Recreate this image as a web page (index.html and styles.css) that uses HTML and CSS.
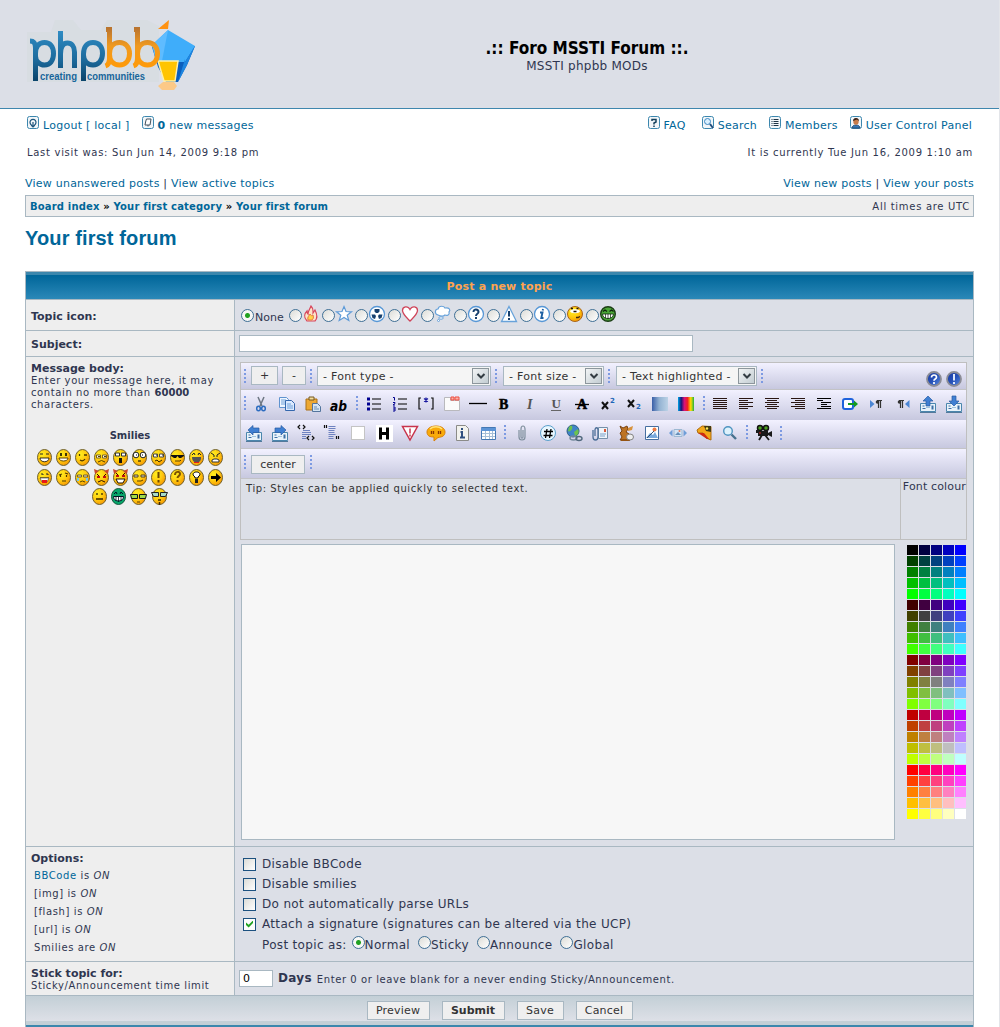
FILE: index.html
```html
<!DOCTYPE html>
<html lang="en">
<head>
<meta charset="utf-8">
<title>Foro MSSTI Forum - Post a new topic</title>
<link rel="stylesheet" href="styles.css">
</head>
<body>
<svg class="defs" aria-hidden="true">
  <defs>
    <linearGradient id="g-blue" gradientUnits="userSpaceOnUse" x1="0" y1="10" x2="0" y2="60"><stop offset="0" stop-color="#2f8cc4"/><stop offset=".6" stop-color="#1c6a9c"/><stop offset="1" stop-color="#0b456c"/></linearGradient>
    <linearGradient id="g-orange" gradientUnits="userSpaceOnUse" x1="0" y1="8" x2="0" y2="48"><stop offset="0" stop-color="#b9742f"/><stop offset=".45" stop-color="#f09a20"/><stop offset="1" stop-color="#ff9a08"/></linearGradient>
    <radialGradient id="g-face" cx=".35" cy=".3" r=".8"><stop offset="0" stop-color="#ffee20"/><stop offset=".5" stop-color="#ffcb10"/><stop offset="1" stop-color="#f59000"/></radialGradient>
    <linearGradient id="g-steel"><stop offset="0" stop-color="#3a5fa8"/><stop offset=".45" stop-color="#93b2d2"/><stop offset="1" stop-color="#bcd2e6"/></linearGradient>
    <linearGradient id="g-rain"><stop offset="0" stop-color="#00a8e8"/><stop offset=".2" stop-color="#15157a"/><stop offset=".4" stop-color="#d8127a"/><stop offset=".6" stop-color="#f02020"/><stop offset=".8" stop-color="#ffe000"/><stop offset="1" stop-color="#20b040"/></linearGradient>
    <linearGradient id="g-help" x1="0" y1="0" x2="1" y2="1"><stop offset="0" stop-color="#1c3aa0"/><stop offset=".5" stop-color="#2450b8"/><stop offset="1" stop-color="#5f8fe0"/></linearGradient>
    <g id="face"><ellipse cx="7.5" cy="8.5" rx="7" ry="8" fill="url(#g-face)" stroke="#6d6030"/></g>
    <g id="frame"><rect x=".5" y=".5" width="11" height="12" rx="2" fill="#f2f6f9" stroke="#3c87ae"/></g>
    <g id="tray"><path d="M2.500 9.500h15v8h-15z" fill="#e9f3fa" stroke="#4b86ad"/><path d="M4.500 11.500h2v1h-2zM4.500 14h3v1h-3zM13.500 11.500h2v4h-2z" fill="#3b6ea5"/><path d="M8 13.500h4" stroke="#9fc3de"/><path d="M2 18.500h16" stroke="#53799b"/></g>
  </defs>
</svg>

<div class="page">
<header class="banner">
  <svg class="logo" viewBox="0 0 180 80" role="img" aria-label="phpBB creating communities">
    <path d="M0 12h24l4-12h18l8 10h20l6-10h40l12 6v56H0z" fill="#d3d9dd" opacity=".4"/>
    <path d="M125 27l6 20 8 15h12l9-17 8-19z" fill="#0b5fbe"/>
    <path d="M125 25l16-15 27 16-10 16h-27z" fill="#3fadfa"/>
    <path d="M141 10l-6 31h-6l-4-16z" fill="#5fbcff"/>
    <path d="M168 26l-10 16v-3l-7 23 9-17z" fill="#1e86e0"/>
    <path d="M131 41h20l-3 20h-11z" fill="#ffc400" stroke="#fff0a8" stroke-width="1.500"/>
    <path d="M131 9l11-9-1 9z" fill="#ff9212"/>
    <path d="M136 62h11l3 4-3 4h-12l-4-4z" fill="#ffc77c" opacity=".9"/>
    <g fill="none" stroke-width="5">
      <path d="M3 21c4 0 5.500 2 5.500 7v33M8.500 33.500c0-7 3.500-11 9-11s9 4 9 11-3.500 11.500-9 11.500c-5 0-9-4-9-9" stroke="url(#g-blue)"/>
      <path d="M33.500 11v37M33.500 34c0-8 3-11 7-11s7 3 7 9v16" stroke="url(#g-blue)"/>
      <path d="M56.500 61V34M56.500 34c0-7 3.500-11.500 9.500-11.500s9.500 4 9.500 11-4 11.500-9.500 11.500-9.500-4-9.500-10" stroke="url(#g-blue)"/>
      <path d="M79 9.500h3.500V38c0 5-1 7-4 8M82.500 34c0-8 4.500-11.500 10-11.500s10 4 10 11-4 11.500-10 11.500-10-4-10-11" stroke="url(#g-orange)"/>
      <path d="M107 9.500h3.500V38c0 5-1 7-4 8M110.500 34c0-8 4.500-11.500 10-11.500s10 4 10 11-4 11.500-10 11.500-10-4-10-11" stroke="url(#g-orange)"/>
    </g>
    <text x="13" y="60" class="logo-tag" textLength="37" lengthAdjust="spacingAndGlyphs">creating</text>
    <text x="60" y="60" class="logo-tag" textLength="58" lengthAdjust="spacingAndGlyphs">communities</text>
  </svg>
  <div class="site">
    <h1>.:: Foro MSSTI Forum ::.</h1>
    <p>MSSTI phpbb MODs</p>
  </div>
</header>

<nav class="menubar">
  <div class="menu">
    <a class="mi"><svg width="12" height="13"><use href="#frame"/><path d="M4.500 9a3 3 0 1 1 3 0M6 6v5M4 9l2 2 2-2" fill="none" stroke="#1d557c" stroke-width="1.200"/></svg><span>Logout [ local ]</span></a>
    <a class="mi"><svg width="12" height="13"><use href="#frame"/><path d="M4.500 3h4.500l-1 6H3l.8-4zM6 9v1.500" fill="#fff" stroke="#44525e"/></svg><span><b>0</b> new messages</span></a>
  </div>
  <div class="menu menu-right">
    <a class="mi"><svg width="12" height="13"><use href="#frame"/><path d="M4 5V3.500h4V6L6 7v1.500M6 9.500V11" fill="none" stroke="#14405c" stroke-width="1.500"/></svg><span>FAQ</span></a>
    <a class="mi"><svg width="12" height="13"><use href="#frame"/><circle cx="5.500" cy="5.500" r="3" fill="#d9f0ff" stroke="#3b86c0"/><path d="M8 8l3 4" stroke="#234f7e" stroke-width="2"/></svg><span>Search</span></a>
    <a class="mi"><svg width="12" height="13"><use href="#frame"/><path d="M2.500 3.500h1M2.500 5.500h1M2.500 7.500h1M2.500 9.500h1M4.500 3.500h5M4.500 5.500h5M4.500 7.500h5M4.500 9.500h5" stroke="#1d3344"/></svg><span>Members</span></a>
    <a class="mi"><svg width="12" height="13"><use href="#frame"/><path d="M2 12c0-4 8-4 8 0z" fill="#3678b8" stroke="#244c76"/><ellipse cx="6" cy="5.500" rx="2.700" ry="3.300" fill="#c77b4a"/><path d="M3 5c0-4 6-4 6 0l-2-1.500z" fill="#382018"/></svg><span>User Control Panel</span></a>
  </div>
</nav>
<div class="times"><span>Last visit was: Sun Jun 14, 2009 9:18 pm</span><span class="now">It is currently Tue Jun 16, 2009 1:10 am</span></div>

<div class="searches"><span><a>View unanswered posts</a> | <a>View active topics</a></span><span><a>View new posts</a> | <a>View your posts</a></span></div>
<div class="crumbs"><span class="path"><a>Board index</a> » <a>Your first category</a> » <a>Your first forum</a></span><span class="utc">All times are UTC</span></div>
<h2>Your first forum</h2>

<form class="post">
  <div class="caption">Post a new topic</div>

  <div class="row row-icon">
    <div class="label mid"><b>Topic icon:</b></div>
    <div class="field icons">
      <label class="none"><input type="radio" name="icon" checked><span>None</span></label>
      <label><input type="radio" name="icon"><svg width="18" height="18"><path d="M5 16C1 12 3 8 5 6c0 2 1 3 1 3 0-3 2-5 3-8 3 3 2 5 2 7l2-3c2 4 3 8 0 11z" fill="#fbe3c8" stroke="#d8455c" stroke-width="1.200"/><path d="M6 15c-1-3 1-4 2-6 1 2 2 2 3 1 1 3 0 4-1 5z" fill="#ffd34a" stroke="#e87840"/></svg></label>
      <label><input type="radio" name="icon"><svg width="18" height="18"><path d="M9 1.500l2 5 5.500.3-4.300 3.400 1.600 5.300L9 12.500l-4.800 3 1.600-5.300L1.500 6.800 7 6.500z" fill="#fff" stroke="#5e9bd8" stroke-width="1.200"/></svg></label>
      <label><input type="radio" name="icon"><svg width="18" height="18"><circle cx="9" cy="9" r="7.500" fill="#fff" stroke="#5797d6" stroke-width="1.300"/><path d="M6.500 4h5v2.500L10 8H8L6.500 6.500zM3.500 9.500H7L8 11l-1 3-2.500-1zM14.500 9.500H11L10 11l1 3 2.500-1z" fill="#17406e"/></svg></label>
      <label><input type="radio" name="icon"><svg width="18" height="18"><path d="M9 16C5 12 1.500 9 1.500 5.500 1.500 1 7 .5 9 4.500 11 .5 16.500 1 16.500 5.500 16.500 9 13 12 9 16z" fill="#fff" stroke="#cf4459" stroke-width="1.300"/></svg></label>
      <label><input type="radio" name="icon"><svg width="18" height="18"><path d="M4 10C0 9 1 4 4 4c1-4 6-3 7-1 4-1 6 2 4 4 1 3-2 4-4 3-2 2-5 1-7 0z" fill="#fff" stroke="#68a2da" stroke-width="1.200"/><ellipse cx="7" cy="13" rx="2.300" ry="1.200" fill="#fff" stroke="#68a2da"/><circle cx="4.500" cy="15.500" r="1" fill="#fff" stroke="#68a2da"/></svg></label>
      <label><input type="radio" name="icon"><svg width="18" height="18"><circle cx="9" cy="9" r="7.500" fill="#fff" stroke="#5797d6" stroke-width="1.300"/><path d="M6.500 7c0-3.500 5-3 5 0 0 2-2.500 1.500-2.500 4M9 12v2" fill="none" stroke="#17406e" stroke-width="2"/></svg></label>
      <label><input type="radio" name="icon"><svg width="18" height="18"><path d="M9 1.500l7.500 15h-15z" fill="#fff" stroke="#68a2da" stroke-width="1.300"/><path d="M9 6v5.500M9 13v2" stroke="#17406e" stroke-width="2"/></svg></label>
      <label><input type="radio" name="icon"><svg width="18" height="18"><circle cx="9" cy="9" r="7.500" fill="#fff" stroke="#5797d6" stroke-width="1.300"/><path d="M7 7.500h2.500L8.300 13H10.500M10 4l-.3 1.500" fill="none" stroke="#1c5fa2" stroke-width="1.900"/></svg></label>
      <label><input type="radio" name="icon"><svg width="18" height="18"><circle cx="9" cy="9" r="7.500" fill="url(#g-face)" stroke="#a8641c"/><path d="M4 6c1-2.500 9-2.500 10 0 0 3-10 3-10 0z" fill="#fff"/><path d="M5 3.500h2M10.500 3.500h2M7.500 6.500h3" stroke="#201408" stroke-width="1.400"/><path d="M10 12.500h2l2-1" fill="none" stroke="#402810" stroke-width="1.300"/></svg></label>
      <label><input type="radio" name="icon"><svg width="18" height="18"><circle cx="9" cy="9" r="7.300" fill="#4aa636" stroke="#1c3e16" stroke-width="1.400"/><path d="M4 6.500l2-1.500 2 1.500M10.500 6.500l2-1.500 2 1.500" fill="none" stroke="#0c220a" stroke-width="1.200"/><path d="M3.500 9h11c0 6-11 6-11 0z" fill="#fff" stroke="#0c220a" stroke-width=".8"/><path d="M6.500 9v4M9 9v5M11.500 9v4" stroke="#0c220a" stroke-width=".7"/></svg></label>
    </div>
  </div>

  <div class="row row-subject">
    <div class="label mid"><b>Subject:</b></div>
    <div class="field"><input class="subject" type="text"></div>
  </div>

  <div class="row row-body">
    <div class="label">
      <b>Message body:</b>
      <p class="small">Enter your message here, it may<br>contain no more than <b>60000</b><br>characters.</p>
      <div class="smilies-title">Smilies</div>
      <div class="smilies">
        <div>
          <svg><use href="#face"/><path d="M3 5h3M9 5h3" stroke="#222"/><path d="M3 9h9c0 5-9 5-9 0z" fill="#fff" stroke="#000" stroke-width=".8"/></svg>
          <svg><use href="#face"/><path d="M5 4v3M10 4v3" stroke="#000" stroke-width="1.500"/><path d="M3 9h9c0 4-9 4-9 0z" fill="#fff" stroke="#5d4300"/></svg>
          <svg><use href="#face"/><path d="M4.500 5v2M9 6h3M5 11q3 2 5-1" fill="none" stroke="#4c3600" stroke-width="1.300"/></svg>
          <svg><use href="#face"/><path d="M2.500 6h4v3h-4zM8.500 6h4v3h-4z" fill="#ffe" stroke="#776124"/><path d="M4 7.500h2M10 7.500h2M4 13q3.500-3 7 0" fill="none" stroke="#5a4200"/></svg>
          <svg><use href="#face"/><path d="M2.500 4h4v3h-4zM8.500 4h4v3h-4z" fill="#fff" stroke="#333"/><path d="M6 9h3v5H6z" fill="#111"/></svg>
          <svg><use href="#face"/><circle cx="4" cy="6" r="2.800" fill="#fff" stroke="#222"/><circle cx="11" cy="6" r="2.800" fill="#fff" stroke="#222"/><path d="M4 6h1M10 6h1M6 12h3" stroke="#000"/></svg>
          <svg><use href="#face"/><path d="M2.500 5h4v3h-4zM8.500 5h4v3h-4z" fill="#fff" stroke="#444"/><path d="M5 6h1M11 6h1M4 12l2-1 2 2 3-2" fill="none" stroke="#3c2900"/></svg>
          <svg><use href="#face"/><path d="M1 6h13v1l-3 2H9L7.500 7 6 9H4L1 7z" fill="#111"/><path d="M5 12h5l1-1" fill="none" stroke="#5b3e00"/></svg>
          <svg><use href="#face"/><path d="M3 6l2-2 1 2M9 6l1-2 2 2" fill="none" stroke="#222"/><path d="M3 8h9c1 7-9 8-9 0z" fill="#555"/><path d="M5 13h5v1H5z" fill="#e02020"/></svg>
          <svg><use href="#face"/><path d="M3 4l3 2v2M12 4L9 6v2" fill="none" stroke="#222"/><path d="M4 13v-2l2-1h3l2 1v2z" fill="#fff" stroke="#333"/></svg>
        </div>
        <div>
          <svg><use href="#face"/><path d="M4 5h2v1M9 5h2v1M3 9h9" fill="none" stroke="#222"/><path d="M3 9h9l-2 4H5z" fill="#fff" stroke="#333" stroke-width=".6"/><path d="M5 11h5v3H5z" fill="#e81818"/></svg>
          <svg><use href="#face"/><path d="M3 6l3-1M9 4l3 1M4.500 6v2M10.500 6v2M6 12h4" fill="none" stroke="#513700" stroke-width="1.200"/></svg>
          <svg><use href="#face"/><path d="M2.500 6h4v2h-4zM8.500 6h4v2h-4z" fill="#ddd" stroke="#776124"/><path d="M3 9v3M12 9v3" stroke="#74c7ee" stroke-width="2"/><path d="M5 13q2-2 5 0" fill="none" stroke="#5a4200"/></svg>
          <svg><use href="#face"/><path d="M0 0l5 2-4 3zM15 0l-5 2 4 3z" fill="#c84a2c"/><path d="M3 5l3 3M12 5L9 8" stroke="#300"/><path d="M3 7h3v2H3zM9 7h3v2H9z" fill="#c01010"/><path d="M4 13q3.500-3 7 0" fill="none" stroke="#301000"/></svg>
          <svg><use href="#face"/><path d="M0 0l5 2-4 3zM15 0l-5 2 4 3z" fill="#c84a2c"/><path d="M3 4l3 3M12 4L9 7" stroke="#300"/><path d="M3 6h3v2H3zM9 6h3v2H9z" fill="#c01010"/><path d="M3 10h9l-2 4H5z" fill="#fff" stroke="#201000"/></svg>
          <svg><use href="#face"/><path d="M2 6h4v2H2zM9 6h4v2H9z" fill="#ddd" stroke="#514018"/><path d="M5 12h4l2-1" fill="none" stroke="#5b3e00"/></svg>
          <svg><use href="#face"/><path d="M7.500 3v6M7.500 11v2.500" stroke="#6b4700" stroke-width="2"/></svg>
          <svg><use href="#face"/><path d="M5 6c0-4 5-4 5-1 0 2-2.500 2-2.500 4M7.500 11v2" fill="none" stroke="#7b5200" stroke-width="2"/></svg>
          <svg><use href="#face"/><path d="M6 9V8C2 5 5 3 7.500 3S13 5 9 8v1z" fill="#fff" stroke="#000"/><path d="M6 10h3v4H6z" fill="#222"/></svg>
          <svg><use href="#face"/><path d="M3 7h5V4l5 4.500L8 13v-3H3z" fill="#000"/></svg>
        </div>
        <div>
          <svg><use href="#face"/><path d="M5 5v2M10 5v2M4 11h7" stroke="#3a2900" stroke-width="1.300"/></svg>
          <svg><ellipse cx="7.500" cy="8.500" rx="7" ry="8" fill="#06a66a" stroke="#17583e"/><path d="M3 6l2-2 1 2M9 6l1-2 2 2" fill="none" stroke="#012"/><path d="M2.500 8.500h10c0 6-10 6-10 0z" fill="#fff" stroke="#012"/><path d="M5 9v4M7.500 9v5M10 9v4" stroke="#012" stroke-width=".8"/></svg>
          <svg class="wide"><use href="#face" x="1"/><path d="M.5 6.500h7v4h-6zM9.500 6.500h7l-1 4h-6z" fill="#9ed94a" stroke="#111"/><path d="M7 14h3" stroke="#5b3e00"/></svg>
          <svg class="wide"><use href="#face" x="1"/><path d="M.5 4.500h7v4h-5zM9.500 4.500h7l-2 4h-5z" fill="#a8dcc8" stroke="#222"/><path d="M7 12h3M8.500 14v3" stroke="#402800" stroke-width="1.500"/></svg>
        </div>
      </div>
    </div>

    <div class="field editor-cell">
      <div class="editor">
        <div class="bar bar1">
          <i class="dots"></i><button type="button" class="btn plus">+</button><button type="button" class="btn minus">-</button>
          <i class="dots d2"></i><span class="select s1"><span>- Font type -</span><i class="arrow"><svg width="8" height="6"><path d="M.5 1L4 4.500 7.500 1" fill="none" stroke="#333c42" stroke-width="2"/></svg></i></span>
          <i class="dots"></i><span class="select s2"><span>- Font size -</span><i class="arrow"><svg width="8" height="6"><path d="M.5 1L4 4.500 7.500 1" fill="none" stroke="#333c42" stroke-width="2"/></svg></i></span>
          <i class="dots"></i><span class="select s3"><span>- Text highlighted -</span><i class="arrow"><svg width="8" height="6"><path d="M.5 1L4 4.500 7.500 1" fill="none" stroke="#333c42" stroke-width="2"/></svg></i></span>
          <i class="dots"></i>
          <span class="help"><svg width="16" height="16"><circle cx="8" cy="8" r="7" fill="url(#g-help)" stroke="#8b8c96" stroke-width="1.800"/><path d="M5.500 6.500c0-3.500 5-3 5-.3 0 2-2.500 1.500-2.500 3.500M8 11v2" fill="none" stroke="#fff" stroke-width="1.700"/></svg><svg width="16" height="16"><circle cx="8" cy="8" r="7" fill="url(#g-help)" stroke="#8b8c96" stroke-width="1.800"/><path d="M8 3v6.500M8 11v2" stroke="#dfe8fa" stroke-width="2"/></svg></span>
        </div>

        <div class="bar bar2">
          <i class="dots"></i>
          <svg><path d="M7 3l4 9M13 3L9 12" stroke="#6d7683" stroke-width="1.500"/><ellipse cx="7.500" cy="14.500" rx="1.800" ry="2.300" fill="none" stroke="#2c6cc0" stroke-width="1.500"/><ellipse cx="12.500" cy="14.500" rx="1.800" ry="2.300" fill="none" stroke="#2c6cc0" stroke-width="1.500"/></svg>
          <svg><path d="M2.500 3.500h7l2 2v8h-9z" fill="#eef5ff" stroke="#5f93cf"/><path d="M4 6h5M4 8h5M4 10h5" stroke="#6fa0d8"/><path d="M8.500 6.500h6l3 3v7h-9z" fill="#dceaff" stroke="#3467ad"/><path d="M10 10h4M10 12h6M10 14h6" stroke="#6fa0d8"/></svg>
          <svg><path d="M3 5h11v11H3z" fill="#eda832" stroke="#a9701a"/><path d="M6 3h5v3H6z" fill="#f3dd9e" stroke="#77591e"/><path d="M9.500 9.500h5l3 3v5h-8z" fill="#d5e4f3" stroke="#53759d"/><path d="M11 13h3M11 15h5" stroke="#6d8db1"/></svg>
          <svg><text x="1" y="17" class="ic-ab" textLength="17" lengthAdjust="spacingAndGlyphs">ab</text></svg>
          <i class="dots da"></i>
          <svg><path d="M3 5h3M3 10h3M3 15h3" stroke="#000090" stroke-width="3"/><path d="M8 5h9M8 10h9M8 15h9" stroke="#000" stroke-width="1.200"/></svg>
          <svg><path d="M3 3.500h1.500v3M3 8.500h2v1l-2 1.500h2M3 13h2v4H3M3 15h2" fill="none" stroke="#000090"/><path d="M8 5h9M8 10h9M8 15h9" stroke="#000" stroke-width="1.200"/></svg>
          <svg><path d="M5 4H3v11h2M15 4h2v11h-2" fill="none" stroke="#111" stroke-width="1.200"/><path d="M10 3.500v5M8 4.500l4 3M12 4.500l-4 3" stroke="#1a1aa0" stroke-width="1.200"/></svg>
          <svg><path d="M2.500 3.500h6v3h9v10h-15z" fill="#fbfbfb" stroke="#b9b9bd"/><path d="M9 3h3v3H9zM13 3h4v3h-4z" fill="#f8b0a8" stroke="#ef4f42"/></svg>
          <svg><path d="M1 9.500h18" stroke="#000" stroke-width="1.300"/></svg>
          <svg><text x="5" y="15" class="ic-b">B</text></svg>
          <svg><text x="7" y="15" class="ic-i">I</text></svg>
          <svg><text x="5.500" y="14" class="ic-u">U</text><path d="M5 16.500h10" stroke="#666"/></svg>
          <svg><text x="5" y="15" class="ic-b">A</text><path d="M3 10.500h14" stroke="#000" stroke-width="1.300"/></svg>
          <svg><path d="M4 8l6 7M10 8l-6 7" stroke="#111" stroke-width="2"/><text x="12" y="9" class="ic-n">2</text></svg>
          <svg><path d="M4 6l6 7M10 6l-6 7" stroke="#111" stroke-width="2"/><text x="12" y="15" class="ic-n">2</text></svg>
          <svg><path d="M2 3h16v14H2z" fill="url(#g-steel)"/></svg>
          <svg><path d="M2 3h16v14H2z" fill="url(#g-rain)"/></svg>
          <i class="dots db"></i>
          <svg><path d="M3 4.500h14M3 6.500h14M3 8.500h14M3 10.500h14M3 12.500h14M3 14.500h14" stroke="#2a1612"/></svg>
          <svg><path d="M3 4.500h14M3 6.500h9M3 8.500h14M3 10.500h9M3 12.500h14M3 14.500h9" stroke="#2a1612"/></svg>
          <svg><path d="M3 4.500h14M5 6.500h10M3 8.500h14M5 10.500h10M3 12.500h14M5 14.500h10" stroke="#2a1612"/></svg>
          <svg><path d="M3 4.500h14M7 6.500h10M3 8.500h14M7 10.500h10M3 12.500h14M7 14.500h10" stroke="#2a1612"/></svg>
          <svg><path d="M3 4.500h14M3 6.500h6M7 8.500h10M7 10.500h6M7 12.500h10M3 14.500h14" stroke="#000"/></svg>
          <svg><rect x="3" y="5" width="10" height="10" rx="2" fill="#fff" stroke="#1f62dc" stroke-width="2"/><path d="M8 10h7" stroke="#129a22" stroke-width="2"/><path d="M14 6.500l4 3.500-4 3.500z" fill="#129a22"/></svg>
          <svg><path d="M4 6l4.500 4L4 14z" fill="#4b86d4"/><path d="M12.500 6v8M14.500 6v8M16 6.500h-5" stroke="#333" stroke-width="1.200"/><circle cx="11.500" cy="8" r="1.800" fill="#333"/></svg>
          <svg><path d="M17.500 6L13 10l4.500 4z" fill="#4b86d4"/><path d="M8.500 6v8M10.500 6v8M12 6.500H7" stroke="#333" stroke-width="1.200"/><circle cx="7.500" cy="8" r="1.800" fill="#333"/></svg>
          <svg><use href="#tray"/><path d="M10 2l5 5h-3v5H8V7H5z" fill="#3f7fd2" stroke="#2a5ba4" stroke-width=".7"/></svg>
          <svg><use href="#tray"/><path d="M8 2h4v5h3l-5 5-5-5h3z" fill="#3f7fd2" stroke="#2a5ba4" stroke-width=".7"/></svg>
        </div>

        <div class="bar bar3">
          <svg><use href="#tray"/><path d="M4 7l5-4.500V5h6v4.500H9V12z" fill="#3f7fd2" stroke="#2a5ba4" stroke-width=".7"/></svg>
          <svg><use href="#tray"/><path d="M16 7l-5-4.500V5H5v4.500h6V12z" fill="#3f7fd2" stroke="#2a5ba4" stroke-width=".7"/></svg>
          <svg><path d="M4 2L2 4l2 2M7 2l2 2-2 2M13 13l-2 2 2 2M16 13l2 2-2 2" fill="none" stroke="#111" stroke-width="1.200"/><path d="M7 7.500h7M6 9.500h9M6 11.500h9M6 13.500h4M6 15.500h4" stroke="#6f83c0"/></svg>
          <svg><path d="M2.500 2v3M4.500 2v3M14.500 13v3M16.500 13v3" stroke="#111" stroke-width="1.200"/><path d="M6.500 3.500h7M6.500 5.500h7M6.500 7.500h6M6.500 9.500h6M6.500 11.500h7M6.500 13.500h5M6.500 15.500h5" stroke="#6f83c0"/></svg>
          <svg><rect x="3.500" y="3.500" width="13" height="13" fill="#fff" stroke="#c4c4c4"/></svg>
          <svg><path d="M2 2h17v17H2z" fill="#fff"/><path d="M6.500 4.500v12M13.500 4.500v12M6 10.500h8" stroke="#000" stroke-width="3"/></svg>
          <svg><path d="M2.500 3.500h15L10 17z" fill="#fff" stroke="#c8344c" stroke-width="1.500"/><path d="M10 5.500v5M10 11.500v2" stroke="#c8344c" stroke-width="1.500"/></svg>
          <svg><path d="M1 9c0-8 18-8 18 0 0 4-3 5-7 5.500L8 18v-4c-4 0-7-1-7-5z" fill="#f9ab0a" stroke="#d98009"/><path d="M4 6c3-3 9-3 12 0" fill="none" stroke="#ffe47a" stroke-width="1.500"/><path d="M5.500 8v3M7.500 8v3M12.500 8v3M14.500 8v3" stroke="#8a3500" stroke-width="1.300"/></svg>
          <svg><path d="M4.500 2.500h9l3 3v12h-12z" fill="#f2f2ee" stroke="#8b8b88"/><path d="M10 5v2M8.500 9H10v5M8 14.500h5" fill="none" stroke="#305080" stroke-width="2"/></svg>
          <svg><path d="M3.500 4.500h14v12h-14z" fill="#fff" stroke="#4478b4"/><path d="M3 5h15v3H3z" fill="#5c94d6"/><path d="M4 10.500h13M4 13.500h13M7.500 8v8M11.500 8v8M14.500 8v8" stroke="#a6bfd8"/></svg>
          <i class="dots dc"></i>
          <svg><path d="M7 7v7c0 4 6 4 6 0V6c0-4-4-4-4 0v8c0 1.500 2 1.500 2 0V7" fill="none" stroke="#7f8f9d" stroke-width="1.200"/></svg>
          <svg><circle cx="10" cy="10" r="7.500" fill="#e8f7ff" stroke="#5ba0cc"/><path d="M9 6L7.500 15M13 6l-1.500 9M6 8.500h9M5.500 12.500h9" stroke="#000" stroke-width="1.300"/></svg>
          <svg><circle cx="9" cy="8" r="6" fill="#3f84c8" stroke="#2c5c84"/><path d="M5 4c3-3 4 0 3 2s-3 3-4 2zM10 9l4-3c2 4-1 7-3 7z" fill="#6cc24e"/><ellipse cx="9.500" cy="15" rx="3.500" ry="2" fill="none" stroke="#72889a" stroke-width="1.400"/><ellipse cx="15" cy="15.500" rx="3" ry="2" fill="none" stroke="#50687c" stroke-width="1.400"/></svg>
          <svg><path d="M8.500 4.500h9v11h-9z" fill="#eef4fa" stroke="#7690aa"/><path d="M14 6h2v3h-2z" fill="#d85838"/><path d="M10 11h6M10 13h5" stroke="#7aa0c8"/><path d="M3 7v7c0 4 5 4 5 0V7c0-3-3-3-3 0v6" fill="none" stroke="#4d6f98" stroke-width="1.300"/></svg>
          <svg><path d="M4 3l3 2 4-2 1 3-2 3 3 2-1 6H4l2-3-2-4 2-2z" fill="#bd7424" stroke="#7b430f"/><path d="M5 16h9v2H5z" fill="#955412"/><ellipse cx="14" cy="14" rx="3.500" ry="3" fill="#eee" stroke="#828282"/><path d="M12 5l5-2-1 4-4 1z" fill="#d8923c"/></svg>
          <svg><path d="M3.500 3.500h13v13h-13z" fill="#fff" stroke="#466fa0"/><path d="M4 15l4-5 3 2 2-3 3 6z" fill="#79a9dc"/><circle cx="12.500" cy="6.500" r="2" fill="#ee7a42"/><path d="M5 15l7-7" stroke="#334e72"/></svg>
          <svg><path d="M6 6.500h8v7H6z" fill="#d4e5f6" stroke="#9db8d2"/><path d="M7 12l3-3 3 3z" fill="#668fba"/><circle cx="11.500" cy="8" r="1" fill="#e87858"/><path d="M4.500 6.500v7L1 10zM15.500 6.500v7L19 10z" fill="#6f9ed8"/></svg>
          <svg><path d="M3 7l5-4 9 .5V17l-5-2-3-5-5 0z" fill="#f4a818" stroke="#ad6c10"/><path d="M10 3h7v6l-5-1z" fill="#413a14"/><path d="M4 10l6 0 5 6h-2z" fill="#cf2b12"/><circle cx="13" cy="5.500" r="1.200" fill="#ffe858"/></svg>
          <svg><circle cx="8" cy="8" r="4.300" fill="#def2fc" stroke="#4f94c0" stroke-width="1.400"/><path d="M11.500 11.500L16 16" stroke="#47718e" stroke-width="2.400"/></svg>
          <i class="dots dd"></i>
          <svg><circle cx="6" cy="5" r="2.500" fill="#4c9c20" stroke="#111" stroke-width="1.500"/><circle cx="12" cy="5" r="2.500" fill="#4c9c20" stroke="#111" stroke-width="1.500"/><path d="M4 8h10v5H4zM14 10l4-2v6l-4-2zM2 7h3v3H2z" fill="#1a1a1a"/><path d="M8 12l-3 5M11 12l4 5" stroke="#1a1a1a" stroke-width="1.800"/><path d="M5 10h2" stroke="#d22"/></svg>
          <i class="dots de"></i>
        </div>

        <div class="bar bar4"><i class="dots"></i><button type="button" class="btn center">center</button><i class="dots d2"></i></div>
        <div class="tips"><div class="tip">Tip: Styles can be applied quickly to selected text.</div><div class="fc">Font colour</div></div>
      </div>
      <div class="compose">
        <textarea class="message"></textarea>
        <div class="palette" id="palette"></div>
      </div>
    </div>
  </div>

  <div class="row row-options">
    <div class="label">
      <b>Options:</b>
      <ul class="opts">
        <li><a>BBCode</a> is <em>ON</em></li><li>[img] is <em>ON</em></li><li>[flash] is <em>ON</em></li><li>[url] is <em>ON</em></li><li>Smilies are <em>ON</em></li>
      </ul>
    </div>
    <div class="field checks">
      <label><input type="checkbox"><span>Disable BBCode</span></label>
      <label><input type="checkbox"><span>Disable smilies</span></label>
      <label><input type="checkbox"><span>Do not automatically parse URLs</span></label>
      <label><input type="checkbox" checked><span>Attach a signature (signatures can be altered via the UCP)</span></label>
      <div class="type"><span class="as">Post topic as:</span><label><input type="radio" name="t" checked><span>Normal</span></label><label><input type="radio" name="t"><span>Sticky</span></label><label><input type="radio" name="t"><span>Announce</span></label><label><input type="radio" name="t"><span>Global</span></label></div>
    </div>
  </div>

  <div class="row row-stick">
    <div class="label"><b>Stick topic for:</b><p class="small">Sticky/Announcement time limit</p></div>
    <div class="field stick"><input class="days" type="text" value="0"><b>Days</b><span class="small">Enter 0 or leave blank for a never ending Sticky/Announcement.</span></div>
  </div>

  <div class="actions"><button type="button" class="btn b1">Preview</button><button type="button" class="btn b2">Submit</button><button type="button" class="btn b3">Save</button><button type="button" class="btn b4">Cancel</button></div>
</form>
</div>
<script src="palette.js"></script>
</body>
</html>
```
FILE: palette.js
```js
var levels = ['00', '40', '80', 'BF', 'FF'];
var palette = document.getElementById('palette');
levels.forEach(function (r) {
  levels.forEach(function (g) {
    levels.forEach(function (b) {
      var cell = document.createElement('span');
      cell.style.backgroundColor = '#' + r + g + b;
      palette.appendChild(cell);
    });
  });
});
```
FILE: styles.css
```css
* { box-sizing: border-box; }
html, body { margin: 0; padding: 0; }
body { background: #fff; color: #2f3650; font: 11px/13px Verdana, "DejaVu Sans", sans-serif; overflow: hidden; }
h1, h2, p, ul { margin: 0; padding: 0; }
a { color: #006699; }
svg { display: block; overflow: visible; }
.defs { position: absolute; width: 0; height: 0; }
.page { height: 1027px; border-right: 1px solid #e3e5e9; }

.banner { display: flex; height: 109px; background: #dcdfe7; border-bottom: 1px solid #3f87ae; }
.logo { width: 180px; height: 80px; margin: 20px 0 0 27px; }
.logo-tag { font: bold 10.5px "Liberation Sans", Arial, sans-serif; fill: #17669a; }
.site { width: 400px; margin-left: 180px; padding-top: 38px; text-align: center; }
.site h1 { font: bold 17px/20px "DejaVu Sans Condensed", "DejaVu Sans", sans-serif; color: #000; }
.site p { font-size: 12px; line-height: 17px; letter-spacing: .25px; }

.menubar { display: flex; justify-content: space-between; padding: 7px 27px 0; height: 31px; font-size: 11px; letter-spacing: .26px; }
.menu { display: flex; gap: 12px; }
.mi { display: flex; gap: 4px; }
.mi span { line-height: 19px; }
.menu-right .mi:first-child { margin-right: 4px; }
.times { display: flex; justify-content: space-between; padding: 6px 27px 0; height: 34px; font-size: 10px; line-height: 13px; letter-spacing: .7px; }
.now { margin-right: -1px; }
.searches { display: flex; justify-content: space-between; height: 21px; padding: 3px 25px 0; letter-spacing: .23px; }
.crumbs { display: flex; justify-content: space-between; width: 949px; height: 22px; margin-left: 25px; padding: 0 4px; border: 1px solid #a9b8c2; background: #eee; font-size: 10px; line-height: 21px; }
.path { font-weight: bold; color: #000; letter-spacing: .17px; }
.utc { letter-spacing: .7px; margin-right: -1px; }
h2 { height: 54px; padding: 8px 0 0 25px; font: bold 20px/26px "Liberation Sans", Arial, sans-serif; letter-spacing: .12px; color: #006699; }

.post { width: 949px; margin-left: 25px; border: 1px solid #a9b8c2; border-bottom: 0; }
.caption { height: 27px; border-top: 3px solid #3c87ad; background: linear-gradient(#006699, #2b88b8); color: #ffa34f; text-align: center; font-weight: bold; line-height: 23px; letter-spacing: .2px; }
.row { display: grid; grid-template-columns: 209px 1fr; border-top: 1px solid #a9b8c2; }
.label { background: #eee; border-right: 1px solid #a9b8c2; padding: 5px 5px 0; }
.mid { display: flex; align-items: center; padding-top: 2px; }
.field { background: #dcdfe7; padding: 0 5px; }
.row-icon { height: 31px; }
.row-subject { height: 26px; }
.row-body { height: 490px; }
.row-options { height: 115px; }
.row-stick { height: 34px; }
.small { font-size: 10px; line-height: 12px; letter-spacing: .6px; white-space: nowrap; }
.small b { letter-spacing: 0; }

input[type="radio"], input[type="checkbox"] { appearance: none; flex: none; width: 13px; height: 13px; margin: 0; border: 1px solid #1c5180; background: linear-gradient(135deg, #dcdcd7, #fff); }
input[type="radio"] { border-radius: 50%; border-color: #3f6f95; }
input[type="radio"]:checked { background: radial-gradient(circle, #21a121 0 2px, #f7f7f5 3px); }
input[type="checkbox"]:checked { background: #fdfdfc; }
input[type="checkbox"]:checked::before { content: ""; display: block; width: 7px; height: 7px; margin: 2px; background: #21a121; clip-path: polygon(0 30%, 38% 62%, 100% 0, 100% 36%, 38% 100%, 0 66%); }
.icons { display: flex; gap: 2px; padding: 5px 6px; }
.icons label { display: flex; align-items: center; height: 18px; }
.icons label input { margin-top: 2px; }
.icons .none { margin-right: 3px; }
.icons .none span { width: 30px; padding: 7px 0 0 1px; }
.subject { display: block; width: 454px; height: 17px; margin: 4px 0 0 -1px; border: 1px solid #a9b8c2; background: #fff; }

.smilies-title { margin-top: 19px; text-align: center; font-size: 10px; font-weight: bold; line-height: 12px; }
.smilies { margin-top: 7px; }
.smilies div { display: flex; justify-content: center; gap: 4px; height: 19.500px; }
.smilies svg { width: 15px; height: 17px; }
.smilies svg.wide { width: 17px; }

.editor-cell { padding: 5px 0 0 5px; }
.editor { width: 727px; border: 1px solid #bfbfbf; }
.bar { display: flex; border-bottom: 1px solid #c3c3c6; background: linear-gradient(#f2f1ff, #c7c8df); }
.bar > svg { width: 20px; height: 20px; margin: 4px 3px 0; }
.dots { flex: none; width: 2px; height: 14px; margin: 6px 2px 0 3px; background: repeating-linear-gradient(#7d9ae2 0 2px, transparent 2px 4px); }
.btn { padding: 0; border: 1px solid #a9b8c2; background: #efefef; color: #333; font: 11px/16px Verdana, "DejaVu Sans", sans-serif; text-align: center; }
.bar1 { height: 27px; }
.bar1 .btn { height: 19px; margin-top: 3px; }
.plus { width: 27px; margin-left: 3px; }
.minus { width: 24px; margin-left: 4px; margin-right: 1px; }
.select { display: flex; justify-content: space-between; height: 20px; margin: 3px 1px 0 3px; padding-left: 5px; border: 1px solid #a9b8c2; background: #f5f5f5; color: #333; line-height: 19px; letter-spacing: .3px; }
.s1 { width: 174px; }
.s2 { width: 101px; margin-left: 4px; }
.s3 { width: 141px; margin-left: 4px; }
.arrow { display: flex; align-items: center; justify-content: center; width: 17px; height: 16px; margin: 1px; border: 1px solid #8d969c; background: linear-gradient(135deg, #f2f4f5, #c3cdd2); }
.help { display: flex; gap: 4px; margin: 8px 0 0 auto; padding-right: 4px; }
.bar2 { height: 30px; border-bottom: 0; }
.dots.da { margin: 6px 3px 0 4px; }
.dots.db { margin: 6px 2px 0 4px; }
.bar3 { height: 29px; }
.bar3 > svg { margin-top: 3px; }
.dots.dc, .dots.dd { margin: 5px 3px 0; }
.ic-ab { font: italic bold 14px "DejaVu Sans", sans-serif; fill: #000; }
.ic-b { font: bold 14px "Liberation Serif", serif; fill: #000; stroke: #000; stroke-width: .5px; }
.ic-i { font: italic bold 14px "Liberation Serif", serif; fill: #555; }
.ic-u { font: bold 13px "Liberation Serif", serif; fill: #555; }
.ic-n { font: bold 7px "DejaVu Sans", sans-serif; fill: #1f66b8; }
.bar4 { height: 30px; }
.center { width: 54px; height: 19px; margin: 6px 2px 0 3px; }
.tips { display: flex; height: 60px; color: #333; }
.tip { width: 660px; padding: 4px 5px; border-right: 1px solid #bfbfbf; font-size: 10px; line-height: 12px; letter-spacing: .58px; }
.fc { white-space: nowrap; padding-left: 2px; line-height: 15px; letter-spacing: .15px; color: #2f3650; }
.compose { display: flex; margin: 4px 0 0 1px; }
.message { display: block; width: 654px; height: 296px; padding: 0; border: 1px solid #a9b8c2; background: #f7f7f7; resize: none; }
.palette { display: grid; grid-template-columns: repeat(5, 11px); grid-auto-rows: 10px; gap: 1px; margin: 1px 0 0 12px; }

.opts { list-style: none; padding: 2px 0 0 3px; font-size: 10px; line-height: 18px; letter-spacing: .6px; }
.checks { padding: 7px 8px 0; font-size: 12px; letter-spacing: .33px; }
.checks > label { display: flex; align-items: center; gap: 6px; height: 20px; }
.type { display: flex; padding: 2px 0 0 19px; line-height: 19px; }
.type label { display: flex; margin-right: 8px; }
.type .as { margin-right: 5px; }
.stick { display: flex; align-items: center; padding: 0 4px; }
.days { width: 34px; height: 17px; margin-right: 5px; padding: 0 3px; border: 1px solid #a9b8c2; font: 11px Verdana, "DejaVu Sans", sans-serif; }
.stick b { font-size: 12px; margin-right: 5px; letter-spacing: .3px; }
.stick .small { padding-top: 2px; letter-spacing: .58px; }
.actions { display: flex; justify-content: center; gap: 12px; height: 32px; padding-top: 5px; border-top: 1px solid #a9b8c2; border-bottom: 2px solid #3c87ad; background: linear-gradient(#c3cfd6, #dde0e7 85%, #c3cfd6 88%); }
.actions .btn { height: 19px; line-height: 17px; letter-spacing: .2px; }
.actions .b1 { width: 63px; }
.actions .b2 { width: 63px; font-weight: bold; letter-spacing: 0; }
.actions .b3 { width: 47px; }
.actions .b4 { width: 57px; }
```
